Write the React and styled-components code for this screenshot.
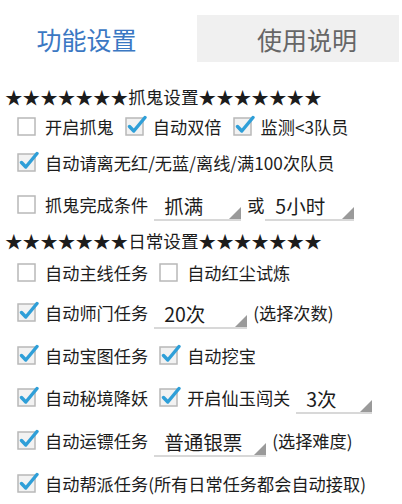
import styled, { createGlobalStyle } from "styled-components";

const Global = createGlobalStyle`
  html, body {
    margin: 0;
    padding: 0;
    background: #ffffff;
  }
  body {
    font-family: "Noto Sans CJK SC", "Noto Sans", sans-serif;
    color: #1c1c1c;
  }
`;

const Page = styled.div`
  width: 402px;
  height: 504px;
  overflow: hidden;
  display: flex;
  flex-direction: column;
`;

const Tabs = styled.div`
  display: flex;
  padding: 15px 3px 0 0;
  height: 47px;
  margin-bottom: 20px;
`;

const Tab = styled.div`
  box-sizing: border-box;
  flex: ${(p) => (p.$active ? "0 0 197px" : "1")};
  display: flex;
  align-items: center;
  justify-content: center;
  font-size: 25px;
  background: ${(p) => (p.$active ? "#ffffff" : "#f0f0f0")};
  color: ${(p) => (p.$active ? "#3b78c3" : "#666")};
  padding: ${(p) => (p.$active ? "0 24px 0 0" : "0 0 0 18px")};
`;

const Header = styled.div`
  height: 28px;
  display: flex;
  align-items: center;
  padding-left: 5px;
  font-size: 17.6px;
  color: #1c1c1c;
  white-space: nowrap;
`;

const Row = styled.div`
  height: ${(p) => p.$h}px;
  display: flex;
  align-items: center;
  padding-left: 17px;
  font-size: 17.2px;
  white-space: nowrap;
`;

const Item = styled.div`
  display: flex;
  align-items: center;
  margin-right: 11px;
`;

const Box = styled.svg`
  width: 22px;
  height: 22px;
  margin-right: 6px;
  flex: none;
`;

const Label = styled.span`
  color: #1c1c1c;
`;

const Spinner = styled.div`
  position: relative;
  width: ${(p) => p.$w}px;
  margin: 0 6px 0 -5px;
  padding-left: 10px;
  box-sizing: border-box;
  height: 30px;
  display: flex;
  align-items: center;
  font-size: 19.5px;
  color: #1c1c1c;
  border-bottom: 2px solid #d8d8d8;
  transform: translateY(2px);
`;

const Corner = styled.span`
  position: absolute;
  right: 0;
  bottom: 0;
  width: 0;
  height: 0;
  border-left: 12px solid transparent;
  border-bottom: 12px solid #9a9a9a;
`;

const Plain = styled.span`
  margin-right: 6px;
  color: #1c1c1c;
`;

function Check({ on, label }) {
  return (
    <Item>
      <Box viewBox="0 0 22 22">
        <rect x="1" y="3" width="17" height="17" fill={on ? "#f2f2f2" : "#ffffff"} stroke="#b8b8b8" strokeWidth="1.5" />
        {on && (
          <path d="M4.5 11.5 L8.8 16 L20 2.5" fill="none" stroke="#2f9fd8" strokeWidth="3.4" strokeLinecap="round" strokeLinejoin="round" />
        )}
      </Box>
      <Label>{label}</Label>
    </Item>
  );
}

function Select({ value, w }) {
  return (
    <Spinner $w={w}>
      {value}
      <Corner />
    </Spinner>
  );
}

const stars = "★★★★★★★";

export default function App() {
  return (
    <Page>
      <Global />
      <Tabs>
        <Tab $active>功能设置</Tab>
        <Tab>使用说明</Tab>
      </Tabs>

      <Header>{stars}抓鬼设置{stars}</Header>
      <Row $h={32}>
        <Check label="开启抓鬼" />
        <Check on label="自动双倍" />
        <Check on label="监测<3队员" />
      </Row>
      <Row $h={40}>
        <Check on label="自动请离无红/无蓝/离线/满100次队员" />
      </Row>
      <Row $h={44}>
        <Check label="抓鬼完成条件" />
        <Select value="抓满" w={87} />
        <Plain>或</Plain>
        <Select value="5小时" w={89} />
      </Row>

      <Header>{stars}日常设置{stars}</Header>
      <Row $h={36}>
        <Check label="自动主线任务" />
        <Check label="自动红尘试炼" />
      </Row>
      <Row $h={44}>
        <Check on label="自动师门任务" />
        <Select value="20次" w={93} />
        <Plain>(选择次数)</Plain>
      </Row>
      <Row $h={42}>
        <Check on label="自动宝图任务" />
        <Check on label="自动挖宝" />
      </Row>
      <Row $h={42}>
        <Check on label="自动秘境降妖" />
        <Check on label="开启仙玉闯关" />
        <Select value="3次" w={76} />
      </Row>
      <Row $h={44}>
        <Check on label="自动运镖任务" />
        <Select value="普通银票" w={112} />
        <Plain>(选择难度)</Plain>
      </Row>
      <Row $h={42}>
        <Check on label="自动帮派任务(所有日常任务都会自动接取)" />
      </Row>
    </Page>
  );
}
